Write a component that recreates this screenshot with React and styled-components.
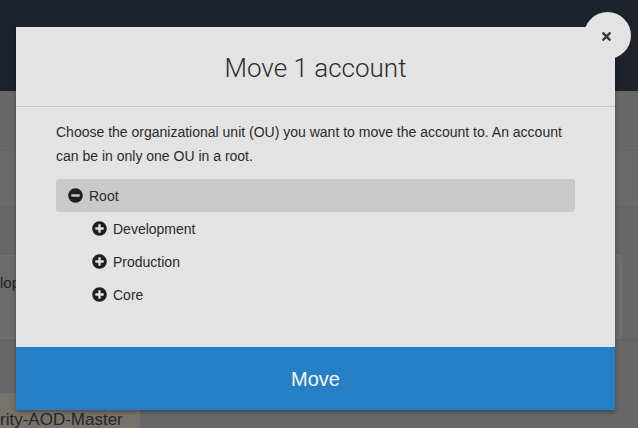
import React from "react";
import styled, { createGlobalStyle } from "styled-components";
import { FaMinusCircle, FaPlusCircle, FaTimes } from "react-icons/fa";

const GlobalStyle = createGlobalStyle`
  html, body {
    margin: 0;
    padding: 0;
    width: 638px;
    height: 428px;
    overflow: hidden;
    background: #676767;
    font-family: "Liberation Sans", Arial, sans-serif;
  }
`;

// page underneath the overlay (already dimmed)
const Page = styled.div`
  width: 638px;
  height: 428px;
  display: flex;
  flex-direction: column;
  background: #676767;
`;

const TopBar = styled.header`
  height: 91px;
  flex-shrink: 0;
  background: #1b222b;
`;

const Band = styled.div`
  height: ${(p) => p.h}px;
  flex-shrink: 0;
  background: ${(p) => p.bg || "#676767"};
  border-top: ${(p) => (p.line ? "1px solid #626262" : "none")};
`;

const Card = styled.div`
  height: 84px;
  width: 622px;
  flex-shrink: 0;
  box-sizing: border-box;
  background: #6b6b6b;
  border: 1px solid #727272;
  border-left: none;
  border-radius: 0 4px 4px 0;
  padding-top: 18px;
  font-size: 15px;
  line-height: 17px;
  color: #232323;
`;

const TableRow = styled.div`
  height: 38px;
  flex-shrink: 0;
  display: flex;
`;

const Cell = styled.div`
  width: 140px;
  background: #77736b;
  font-size: 17px;
  color: #262626;
  display: flex;
  align-items: flex-end;
  white-space: nowrap;
  padding-bottom: 1px;
`;

const Modal = styled.div`
  position: absolute;
  left: 16px;
  top: 27px;
  width: 599px;
  background: #e3e3e3;
  box-shadow: 0 2px 4px rgba(0, 0, 0, 0.35);
  display: flex;
  flex-direction: column;
`;

const Close = styled.button`
  position: absolute;
  right: -16px;
  top: -15px;
  width: 47px;
  height: 47px;
  border-radius: 50%;
  border: none;
  background: #e3e3e3;
  display: flex;
  align-items: center;
  justify-content: center;
  padding: 0;
  color: #383838;
  font-size: 13px;
  svg {
    margin-left: -2px;
    margin-top: 2px;
  }
`;

const Header = styled.div`
  height: 79px;
  border-bottom: 1px solid #c5c5c5;
  display: flex;
  align-items: center;
  justify-content: center;
`;

const Title = styled.h2`
  margin: 2px 0 0;
  font-family: Roboto, "Liberation Sans", sans-serif;
  font-weight: 300;
  font-size: 26px;
  color: #2e2e2e;
`;

const Body = styled.div`
  padding: 13px 40px 36px;
`;

const Intro = styled.p`
  margin: 0 0 11px;
  font-size: 14px;
  line-height: 24px;
  color: #2b2b2b;
`;

const Node = styled.div`
  height: 33px;
  display: flex;
  align-items: center;
  gap: 6px;
  padding-left: ${(p) => 12 + p.depth * 24}px;
  background: ${(p) => (p.selected ? "#c9c9c9" : "transparent")};
  border-radius: 3px;
  font-size: 14px;
  color: #2b2b2b;
  svg {
    font-size: 15px;
    color: #1f1f1f;
  }
`;

const MoveButton = styled.button`
  height: 63px;
  border: none;
  background: #267ec5;
  color: #f4f8fc;
  font-family: "Liberation Sans", Arial, sans-serif;
  font-size: 20px;
  padding: 2px 0 0;
`;

const children = ["Development", "Production", "Core"];

export default function App() {
  return (
    <>
      <GlobalStyle />
      <Page>
        <TopBar />
        <Band h={59} />
        <Band h={55} bg="#6a6a6a" line />
        <Band h={48} line />
        <Card>lop</Card>
        <Band h={53} line />
        <TableRow>
          <Cell>rity-AOD-Master</Cell>
        </TableRow>
      </Page>
      <Modal>
        <Close aria-label="Close">
          <FaTimes />
        </Close>
        <Header>
          <Title>Move 1 account</Title>
        </Header>
        <Body>
          <Intro>
            Choose the organizational unit (OU) you want to move the account to. An account
            can be in only one OU in a root.
          </Intro>
          <Node depth={0} selected>
            <FaMinusCircle />
            Root
          </Node>
          {children.map((name) => (
            <Node depth={1} key={name}>
              <FaPlusCircle />
              {name}
            </Node>
          ))}
        </Body>
        <MoveButton>Move</MoveButton>
      </Modal>
    </>
  );
}
